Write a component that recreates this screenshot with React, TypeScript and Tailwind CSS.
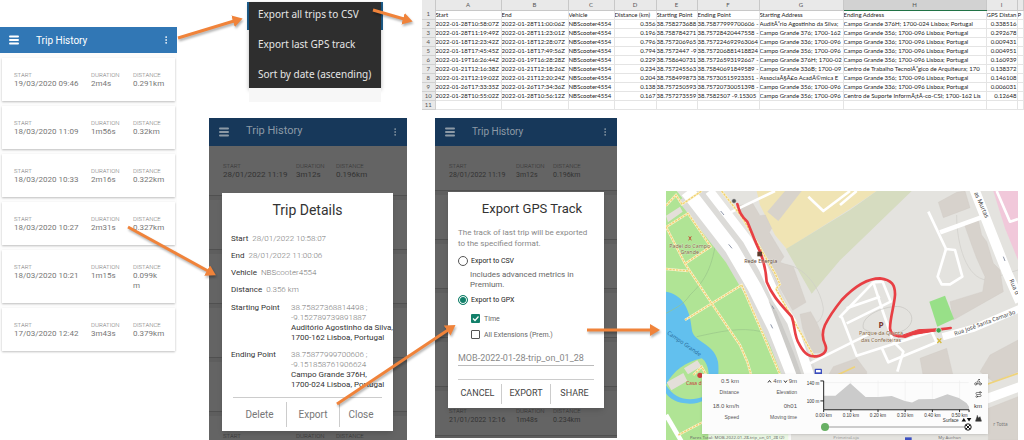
import React from "react";
import { Bike, Menu, MoreVertical, Mountain, Route } from "lucide-react";

type Trip = { start: string; duration: string; distance: string };

const trips: Trip[] = [
  { start: "19/03/2020 09:46", duration: "2m4s", distance: "0.291km" },
  { start: "18/03/2020 11:09", duration: "1m56s", distance: "0.32km" },
  { start: "18/03/2020 10:33", duration: "2m16s", distance: "0.322km" },
  { start: "18/03/2020 10:27", duration: "2m31s", distance: "0.327km" },
  { start: "18/03/2020 10:21", duration: "1m15s", distance: "0.099km" },
  { start: "17/03/2020 12:42", duration: "3m43s", distance: "0.379km" },
];

const letters = ["A", "B", "C", "D", "E", "F", "G", "H", "I", ""];

const sheetRows = [
  ["Start", "End", "Vehicle", "Distance (km)", "Starting Point", "Ending Point", "Starting Address", "Ending Address", "GPS Distan", "P"],
  ["2022-01-28T10:58:07Z", "2022-01-28T11:00:06Z", "NBScooter4554", "0.356", "38.758273688", "38.75877999700606 -", "AuditÃ³rio Agostinho da Silva;", "Campo Grande 376H; 1700-024 Lisboa; Portugal", "0.338516", ""],
  ["2022-01-28T11:19:49Z", "2022-01-28T11:23:01Z", "NBScooter4554", "0.196", "38.758784271", "38.75728420447558 -", "Campo Grande 376; 1700-162", "Campo Grande 356; 1700-096 Lisboa; Portugal", "0.292678", ""],
  ["2022-01-18T12:23:42Z", "2022-01-18T12:28:07Z", "NBScooter4554", "0.796", "38.757206965", "38.757224692963064", "Campo Grande 336; 1700-096", "Campo Grande 336; 1700-096 Lisboa; Portugal", "0.009431", ""],
  ["2022-01-18T17:45:45Z", "2022-01-18T17:49:56Z", "NBScooter4554", "0.794", "38.7572447 -9", "38.757206881418824", "Campo Grande 356; 1700-096", "Campo Grande 336; 1700-096 Lisboa; Portugal", "0.004951", ""],
  ["2022-01-19T16:26:44Z", "2022-01-19T16:28:28Z", "NBScooter4554", "0.229", "38.758640731", "38.75726593192667 -", "Campo Grande 376H; 1700-02", "Campo Grande 356; 1700-096 Lisboa; Portugal", "0.160939", ""],
  ["2022-01-21T12:16:38Z", "2022-01-21T12:18:26Z", "NBScooter4554", "0.234", "38.757245563", "38.75840691849589 -", "Campo Grande 336B; 1700-09", "Centro de Trabalho TecnolÃ³gico de Arquiteura; 170", "0.138372", ""],
  ["2022-01-21T12:19:02Z", "2022-01-21T12:20:24Z", "NBScooter4554", "0.204", "38.758499873", "38.75730515923351 -", "AssociaÃ§Ã£o AcadÃ©mica E", "Campo Grande 356; 1700-096 Lisboa; Portugal", "0.146108", ""],
  ["2022-01-26T17:33:35Z", "2022-01-26T17:34:36Z", "NBScooter4554", "0.138", "38.757250593", "38.75720730051398 -", "Campo Grande 356; 1700-096", "Campo Grande 336; 1700-096 Lisboa; Portugal", "0.006031", ""],
  ["2022-01-28T10:55:02Z", "2022-01-28T10:56:12Z", "NBScooter4554", "0.167", "38.757273559", "38.7582507 -9.15305", "Campo Grande 356; 1700-096", "Centro de Suporte InformÃ¡tÃ­-co-CSI; 1700-162 Lis", "0.12648", ""],
  ["", "", "", "", "", "", "", "", "", ""],
];

type TripColumnsProps = { trip: Trip; columns: string; valueClass?: string };

const TripColumns = ({ trip, columns, valueClass = "text-[8px]" }: TripColumnsProps) => (
  <dl className={`grid leading-[10px] ${columns} ${valueClass}`}>
    <div>
      <dt className="text-[6px] leading-[8px] font-light">START</dt>
      <dd className="whitespace-nowrap">{trip.start}</dd>
    </div>
    <div>
      <dt className="text-[6px] leading-[8px] font-light">DURATION</dt>
      <dd>{trip.duration}</dd>
    </div>
    <div>
      <dt className="text-[6px] leading-[8px] font-light">DISTANCE</dt>
      <dd className="break-all">{trip.distance}</dd>
    </div>
  </dl>
);

const TripHistory = () => (
  <section className="w-[177px] shrink-0 pt-[27px]">
    <header className="flex items-center h-[26px] bg-[#3177b5] pl-2 pr-1.5 text-white">
      <button type="button" aria-label="Menu">
        <Menu size={12} strokeWidth={4} />
      </button>
      <h1 className="ml-4 flex-1 text-[10px]">Trip History</h1>
      <button type="button" aria-label="More">
        <MoreVertical size={10} />
      </button>
    </header>
    <ul className="flex flex-col gap-[5px] bg-[#fcfcfc] pt-[5px] pl-0.5 pr-0.5 text-[#777]">
      {trips.map((trip) => (
        <li key={trip.start} className="bg-white pl-3 pt-[13px] pb-3 shadow-[0_1px_2px_rgba(0,0,0,0.25)]">
          <TripColumns trip={trip} columns={trip.distance === "0.099km" ? "grid-cols-[77px_42px_28px]" : "grid-cols-[77px_42px_1fr]"} />
        </li>
      ))}
    </ul>
  </section>
);

const OverflowMenu = () => (
  <div className="w-[136px] shrink-0 pt-0.5">
    <div className="bg-linear-to-b from-[#1d5f8f] from-33% to-transparent to-33% px-0.5">
      <menu className="flex flex-col gap-4 bg-[#2e2e2e] py-[5px] pl-[9px] h-[86px] text-[10px] leading-[14px] text-[#e6e6e6] font-['Noto_Sans',sans-serif] shadow-[0_2px_4px_rgba(0,0,0,0.3)]">
        <li><button type="button" className="whitespace-nowrap">Export all trips to CSV</button></li>
        <li><button type="button" className="whitespace-nowrap">Export last GPS track</button></li>
        <li><button type="button" className="whitespace-nowrap">Sort by date (ascending)</button></li>
      </menu>
    </div>
    <div className="h-3.5 mx-0.5 bg-[#f7f7f7]"></div>
  </div>
);

const Sheet = () => (
  <div className="flex-1 min-w-0 overflow-hidden">
    <table className="w-full table-fixed border-collapse text-[6px] leading-[8px] text-[#222] font-[Lato,sans-serif]">
      <colgroup>
        <col className="w-[13px]" />
        <col className="w-[66px]" />
        <col className="w-[67px]" />
        <col className="w-[46px]" />
        <col className="w-[42px]" />
        <col className="w-[41px]" />
        <col className="w-[62px]" />
        <col className="w-[84px]" />
        <col className="w-[143px]" />
        <col className="w-[31px]" />
        <col />
      </colgroup>
      <thead>
        <tr className="h-[10px] bg-[#e9e9e9] text-[#555]">
          <th className="border-r border-[#c8c8c8]"></th>
          {letters.map((letter, i) => (
            <th key={i} className={`border-r border-b border-[#c8c8c8] font-normal p-0 ${letter === "H" ? "bg-[#d2d2d2] border-b-[#217346]" : ""}`}>{letter}</th>
          ))}
        </tr>
      </thead>
      <tbody>
        {sheetRows.map((row, i) => (
          <tr key={i} className="h-[9px]">
            <th className="bg-[#e9e9e9] border-r border-b border-[#d0d0d0] font-normal p-0 text-[#555]">{i + 1}</th>
            {row.map((cell, j) => (
              <td key={j} className={`border-r border-b border-[#e4e4e4] p-0 whitespace-nowrap overflow-hidden ${i > 0 && (j === 3 || j === 8) ? "text-right" : ""}`}>{cell}</td>
            ))}
          </tr>
        ))}
      </tbody>
    </table>
  </div>
);

type PhoneProps = {
  className: string;
  titleClass: string;
  cardClass: string;
  columns: string;
  valueClass: string;
  last: Trip;
  children: React.ReactNode;
};

// Trip list dimmed behind an open dialog
const DimmedPhone = ({ className, titleClass, cardClass, columns, valueClass, last, children }: PhoneProps) => {
  const hidden = { start: "", duration: "", distance: "" };
  const cards = [{ start: "28/01/2022 11:19", duration: "3m12s", distance: "0.196km" }, hidden, hidden, hidden, hidden, last];

  return (
    <section className={`relative shrink-0 overflow-hidden bg-[#5e5e5e] ${className}`}>
      <header className="flex items-center h-7 bg-[#17385a] pl-[9px] pr-[7px] text-[#8d9aa6]">
        <button type="button" aria-label="Menu">
          <Menu size={12} strokeWidth={4} />
        </button>
        <h2 className={`ml-4 flex-1 ${titleClass}`}>Trip History</h2>
        <button type="button" aria-label="More">
          <MoreVertical size={10} />
        </button>
      </header>
      <div className="flex flex-col gap-1 text-[#333]">
        {cards.map((trip, i) => (
          <div key={i} className={`shrink-0 bg-[#646464] border-b border-[#505050] pl-3.5 pt-4 ${cardClass}`}>
            {trip.start && <TripColumns trip={trip} columns={columns} valueClass={valueClass} />}
          </div>
        ))}
      </div>
      {children}
    </section>
  );
};

const DetailRow = ({ label, value }: { label: string; value: string }) => (
  <div className="flex items-center gap-1 h-[17px]">
    <dt className="text-[#333]">{label}</dt>
    <dd className="text-[#777] font-light">{value}</dd>
  </div>
);

const PointRow = ({ label, coords, address }: { label: string; coords: string[]; address: string[] }) => (
  <div className="flex mb-[7px]">
    <dt className="w-[60px] shrink-0 text-[#333]">{label}</dt>
    <dd className="whitespace-nowrap">
      {coords.map((line) => <p key={line} className="text-[#777] font-light">{line}</p>)}
      {address.map((line) => <p key={line} className="text-[#333]">{line}</p>)}
    </dd>
  </div>
);

const TripDetails = () => (
  <div role="dialog" aria-label="Trip Details" className="absolute left-[13px] right-3.5 top-[75px] bg-white pt-2 pb-1 shadow-md">
    <h2 className="text-center text-[14px] leading-[18px] text-[#333]">Trip Details</h2>
    <dl className="mt-3 pl-[9px] text-[8px] leading-[10px]">
      <DetailRow label="Start" value="28/01/2022 10:58:07" />
      <DetailRow label="End" value="28/01/2022 11:00:06" />
      <DetailRow label="Vehicle" value="NBScooter4554" />
      <DetailRow label="Distance" value="0.356 km" />
      <div className="pt-1">
        <PointRow label="Starting Point" coords={["38.75827368814498 ;", "-9.152789739891887"]} address={["Auditório Agostinho da Silva,", "1700-162 Lisboa, Portugal"]} />
        <PointRow label="Ending Point" coords={["38.75877999700606 ;", "-9.151858761906624"]} address={["Campo Grande 376H,", "1700-024 Lisboa, Portugal"]} />
      </div>
    </dl>
    <div className="mx-[11px] border-t border-[#ccc] pt-1 grid grid-cols-[54px_53px_1fr] divide-x divide-[#ccc] text-[10px] text-[#777]">
      <button type="button" className="h-[25px]">Delete</button>
      <button type="button" className="h-[25px]">Export</button>
      <button type="button" className="h-[25px]">Close</button>
    </div>
  </div>
);

const ExportTrack = () => (
  <div role="dialog" aria-label="Export GPS Track" className="absolute inset-x-[13px] top-[74px] bg-white pt-2 pb-1 shadow-md text-[8px] text-[#666]">
    <h2 className="pl-3 text-center text-[13px] leading-[18px] text-[#333]">Export GPS Track</h2>
    <div className="px-2.5">
      <p className="mt-[9px] leading-[11px] whitespace-nowrap text-[#888]">The track of last trip will be exported<br />to the specified format.</p>
      <label className="mt-1.5 flex items-center gap-[3px] h-3 text-[7px] leading-[12px] text-[#222]">
        <input type="radio" name="format" className="appearance-none size-2.5 rounded-full border border-[#555] bg-white" />
        Export to CSV
      </label>
      <p className="mt-[3px] pl-3 leading-[10px]">Includes advanced metrics in<br />Premium.</p>
      <label className="mt-1 flex items-center gap-[3px] h-3 text-[7px] leading-[12px] text-[#222]">
        <input type="radio" name="format" defaultChecked className="appearance-none size-2.5 rounded-full border border-[#12806a] bg-white checked:bg-[#12806a] checked:shadow-[inset_0_0_0_1px_white]" />
        Export to GPX
      </label>
      <label className="relative mt-[7px] ml-[13px] flex items-center gap-1 h-3 text-[7px] leading-[12px]">
        <input type="checkbox" defaultChecked className="appearance-none size-[9px] rounded-[1px] bg-[#12806a]" />
        <svg viewBox="0 0 9 9" className="absolute left-0 size-[9px] pointer-events-none">
          <path d="M2 4.5 L4 6.5 L7.5 2.5" fill="none" stroke="white" strokeWidth="1.2" />
        </svg>
        Time
      </label>
      <label className="mt-1 ml-[13px] flex items-center gap-1 h-3 text-[7px] leading-[12px]">
        <input type="checkbox" className="appearance-none size-[9px] rounded-[1px] border border-[#555]" />
        All Extensions (Prem.)
      </label>
      <input aria-label="File name" defaultValue="MOB-2022-01-28-trip_on_01_28" className="mt-[11px] block w-full h-3.5 border-b border-[#bbb] text-[9px] text-[#888] outline-none" />
      <div className="mt-[13px] border-t border-[#ccc] pt-1 grid grid-cols-[44px_49px_1fr] divide-x divide-[#ccc] text-[9px] text-[#444]">
        <button type="button" className="h-5 pr-1">CANCEL</button>
        <button type="button" className="h-5">EXPORT</button>
        <button type="button" className="h-5 pl-1">SHARE</button>
      </div>
    </div>
  </div>
);

const footpaths = [
  "M18 62 L48 30 L66 58 L125 18",
  "M20 125 L84 85 L152 185 L75 236",
  "M18 125 L75 236 L155 355 L240 480 L262 530 L275 575",
  "M18 252 L85 258",
  "M75 405 L245 300 L310 450 L365 580",
  "M55 750 L135 708",
  "M185 18 L245 95 L345 265 L360 298 L348 312 L465 520",
  "M100 570 L125 545 L140 572",
];

const whiteRoads = [
  "M445 35 L490 78 L570 18",
  "M205 85 L345 18",
  "M450 535 L570 475 L625 448",
  "M538 398 L560 375 L640 292 L668 290 L692 350 L560 415",
  "M560 370 L660 335",
  "M545 395 L590 512 L665 488 L815 440",
  "M640 292 L668 378 L700 470 L730 500 L712 560",
  "M665 488 L685 532 L830 472 L815 440",
  "M805 80 L858 192",
  "M858 192 L833 275 L845 298 L870 298 L907 275 L885 195 Z",
  "M1010 18 L1050 110 L1074 102",
  "M540 60 L590 18",
];

const MapDrawing = () => (
  <svg viewBox="18 18 1056 747" className="block w-full" fontFamily="'Noto Sans', sans-serif">
    <rect x="18" y="18" width="1056" height="747" fill="#e4e3df" />
    {/* school grounds and field */}
    <path d="M290 18 H650 L570 72 L380 192 L345 150 L300 60 Z" fill="#f0e4b4" />
    <path d="M650 18 H755 L540 226 L455 326 L378 192 L570 75 Z" fill="#d6dcc0" />
    <path d="M375 18 H425 L355 108 L322 80 Z" fill="#d8d3cb" />
    <path d="M1000 18 H1074 V225 L1035 130 Z" fill="#f1c8da" />
    {/* park and lake */}
    <path d="M18 18 H50 L150 140 L200 215 L245 285 L300 400 L385 575 V765 H18 Z" fill="#b0e495" />
    <path d="M18 320 C60 325 90 365 95 430 C98 475 160 470 174 530 C182 590 160 655 90 656 C50 656 28 640 18 625 Z" fill="#62c0ee" />
    <path d="M18 600 C40 555 80 530 125 520 C150 535 155 600 130 635 C90 650 45 645 18 600 Z" fill="#b0e495" />
    <path d="M72 550 L112 526 L124 544 L84 568 Z M20 592 L70 564 L82 588 L34 616 Z M18 92 L60 65 L68 80 L24 112 Z" fill="#e4dfd9" />
    <g fill="none" stroke="#98c48a" strokeWidth="2">
      <path d="M165 185 C150 270 120 300 90 330 C70 360 45 370 18 385" />
      <path d="M110 455 C180 440 240 425 305 440" />
      <path d="M360 240 C420 230 480 300 490 370 C490 390 480 410 470 412" stroke="#cfcdc8" />
      <path d="M890 90 C890 180 920 280 980 285 L1074 255" stroke="#cfcdc8" />
    </g>
    {/* buildings */}
    <g fill="#d7d2cc" stroke="#cdc8c2" strokeWidth="1">
      <path d="M232 62 L278 55 L300 92 L316 90 L335 130 L328 142 L372 215 L360 232 L400 245 L438 352 L398 376 L355 300 L330 250 L300 180 Z" />
      <path d="M420 388 L452 380 L470 412 L482 440 L500 500 L455 505 L428 430 Z" />
      <path d="M835 52 L890 22 L915 18 L930 68 L850 98 Z" />
      <path d="M912 115 L955 105 L965 150 L980 170 L1000 235 L1020 255 L1030 320 L880 405 L870 350 L968 320 L975 275 L950 220 L935 180 Z" />
      <path d="M990 510 L1074 465 V560 L1000 590 L960 560 Z" />
      <path d="M520 545 L590 520 L620 560 V580 H500 Z" />
      <path d="M780 520 L860 490 L880 575 H790 Z" />
      <path d="M985 670 L1074 635 V765 H985 Z" />
    </g>
    {/* avenue */}
    <path d="M95 18 L240 205 L310 325 L375 460 L425 585" fill="none" stroke="#dcdbd8" strokeWidth="100" />
    <path d="M82 18 L215 190 L285 310 L345 430 L408 590" fill="none" stroke="#fff" strokeWidth="42" />
    <path d="M148 18 L262 165 L310 250 L350 340 L395 410 L455 590" fill="none" stroke="#fff" strokeWidth="28" />
    <path d="M325 345 L350 380 L400 500 L425 570 H410 L380 490 Z" fill="#cccbc8" />
    {whiteRoads.map((d) => (
      <path key={d} d={d} fill="none" stroke="#fff" strokeWidth="8" strokeLinejoin="round" />
    ))}
    <path d="M840 142 L970 95" stroke="#fff" strokeWidth="14" />
    <path d="M942 10 L985 120 L1040 260 L1080 350" fill="none" stroke="#fff" strokeWidth="30" />
    <path d="M848 455 L940 430 L1080 370" fill="none" stroke="#fff" strokeWidth="22" />
    <path d="M970 645 L1080 605" stroke="#fff" strokeWidth="28" />
    <path d="M18 690 L65 770" stroke="#fff" strokeWidth="14" />
    {footpaths.map((d) => (
      <g key={d} fill="none">
        <path d={d} stroke="#fbf3cf" strokeWidth="7" />
        <path d={d} stroke="#f0d070" strokeWidth="4" strokeDasharray="7 3" />
      </g>
    ))}
    <path d="M975 600 L1074 565 M500 585 L585 545" stroke="#efd37a" strokeWidth="5" />
    <path d="M808 350 L855 332 L882 402 L832 425 Z" fill="#98e088" />
    <g fill="none" stroke="#c4c2be" strokeWidth="2">
      <path d="M610 430 C600 390 680 360 720 365 C760 375 765 410 740 430 C720 450 640 455 610 430" />
    </g>
    {/* one-way arrows */}
    <g stroke="#8d95a8" strokeWidth="3">
      <path d="M182 78 L192 90 M206 178 L216 190 M332 418 L338 430 M1030 215 L1035 228 M336 362 L342 372" />
    </g>
    <path
      d="M232 57 C238 80 242 92 262 110 C275 140 285 170 300 200 C312 230 318 260 320 290 C340 340 370 365 395 395 C405 420 402 455 418 478 C435 510 450 516 470 514 C495 510 502 495 496 480 C486 460 486 440 495 420 C510 390 525 370 545 345 C580 308 620 280 660 280 C695 284 706 300 705 330 C703 360 690 400 690 430 C692 455 715 452 735 455 C770 440 800 438 872 429"
      fill="none" stroke="#e83f44" strokeWidth="8" strokeLinecap="round" strokeLinejoin="round"
    />
    <path d="M715 455 L775 434 L870 430 L790 444 Z" fill="#e83f44" stroke="#e83f44" strokeWidth="3" />
    <circle cx="222" cy="48" r="7" fill="#555" stroke="#ddd" strokeWidth="2" />
    <rect x="292" y="200" width="14" height="14" fill="#5d3a2c" />
    <circle cx="836" cy="436" r="8" fill="#43a552" stroke="#eaf5ea" strokeWidth="2" />
    <circle cx="120" cy="571" r="8" fill="#c9403d" />
    <path d="M86 154 L94 166 M94 154 L86 166" stroke="#c05b3c" strokeWidth="3" />
    <path d="M832 460 L844 474 M844 460 L832 474" stroke="#d5b93a" strokeWidth="4" />
    <g fill="#3b4fc1">
      <rect x="464" y="551" width="22" height="20" rx="3" />
      <rect x="468" y="555" width="14" height="7" fill="#fff" />
      <rect x="735" y="757" width="20" height="8" />
    </g>
    <g fontSize="16" textAnchor="middle" fill="#84663f" stroke="#fff" strokeWidth="2" strokeOpacity="0.5" paintOrder="stroke">
      <text x="89" y="188">Padel do Campo</text>
      <text x="89" y="208">Grande</text>
      <text x="302" y="233" fill="#5f4634">Rede Energia</text>
      <text x="663" y="451">Parque da Quinta</text>
      <text x="663" y="471">das Confeiteiras</text>
      <text x="663" y="430" fontSize="25" fontWeight="bold" fill="#7a3a34">P</text>
    </g>
    <text transform="translate(20 446) rotate(35)" fontSize="17" fill="#2b6f9f">Campo Grande</text>
    <text x="78" y="600" fontSize="15" fill="#c9403d">Casa d</text>
    <text transform="translate(885 452) rotate(-20)" fontSize="17" fill="#444">Rua José Santa Camarão</text>
    <text transform="translate(942 24) rotate(66)" fontSize="18" fill="#444">as Murtas</text>
    <text transform="translate(1048 286) rotate(66)" fontSize="18" fill="#444">Rua d</text>
    <text x="1000" y="722" fontSize="14" fill="#777">r Totta</text>
    <text x="835" y="761" fontSize="13" fill="#777">My Auchan</text>
    <text x="520" y="761" fontSize="13" fill="#999">PrimeiraLoja</text>
    <rect x="145" y="746" width="248" height="19" fill="#fff" fillOpacity="0.75" />
    <text x="90" y="761" fontSize="13" fill="#666">Pares Total: MOB-2022-01-28-trip_on_01_28 (2)</text>
  </svg>
);

const ticks = ["0.00 km", "0.10 km", "0.20 km", "0.30 km", "0.40 km", "0.50 km"];

const ElevationPanel = () => (
  <div className="absolute left-9 right-[30px] bottom-1.5 h-[60px] flex bg-[#fcfcfc] shadow-sm text-[#555] font-['Liberation_Sans',sans-serif]">
    <dl className="w-[95px] shrink-0 grid grid-cols-[37px_58px] content-start pt-1 text-right text-[6px] leading-[7px]">
      <div className="flex flex-col gap-1 h-[25px]"><dd>0.5 km</dd><dt className="text-[5px]">Distance</dt></div>
      <div className="flex flex-col gap-1 h-[25px]">
        <dd className="flex items-center justify-end gap-px">
          <svg viewBox="0 0 5 5" className="size-[5px]"><path d="M1 3.5 L2.5 1.5 L4 3.5" fill="none" stroke="#333" /></svg>
          4m
          <svg viewBox="0 0 5 5" className="size-[5px]"><path d="M1 1.5 L2.5 3.5 L4 1.5" fill="none" stroke="#333" /></svg>
          9m
        </dd>
        <dt className="text-[5px]">Elevation</dt>
      </div>
      <div className="flex flex-col gap-1"><dd>18.0 km/h</dd><dt className="text-[5px]">Speed</dt></div>
      <div className="flex flex-col gap-1"><dd>0h01</dd><dt className="text-[5px]">Moving time</dt></div>
    </dl>
    <div className="flex-1 min-w-0 pl-2 pt-1">
      <svg viewBox="345 84 510 138" className="block w-full">
        <path d="M403 98 H845 M485 92 V180 M568 92 V180 M651 92 V180 M734 92 V180 M817 92 V180" stroke="#eee" strokeWidth="2" />
        <path d="M402 181 V138 H438 L483 100 L530 142 L570 142 L610 139 L650 154 L672 159 L692 149 L740 148 L780 134 L815 145 L838 160 L846 172 V181 Z" fill="#cbcbcb" />
        <path d="M392 93 H402 V181 H846 M392 154 H402 M402 181 V188 M485 181 V188 M568 181 V188 M651 181 V188 M734 181 V188 M817 181 V188 M846 181 V188" fill="none" stroke="#222" strokeWidth="3" />
        <g fontSize="14" fill="#333">
          <text x="389" y="104" textAnchor="end">140 m</text>
          <text x="389" y="159" textAnchor="end">100 m</text>
          {ticks.map((tick, i) => (
            <text key={tick} x={402 + i * 83} y="202" textAnchor="middle">{tick}</text>
          ))}
          <text x="766" y="217">Surface</text>
        </g>
        <path d="M823 217 L830 206 L837 217 Z M839 206 H853 L846 217 Z" fill="#111" />
      </svg>
      <div className="flex items-center pl-4">
        <input type="range" aria-label="Position" defaultValue={0} className="appearance-none flex-1 min-w-0 h-0.5 bg-[#ccc] [&::-webkit-slider-thumb]:appearance-none [&::-webkit-slider-thumb]:size-2 [&::-webkit-slider-thumb]:rounded-full [&::-webkit-slider-thumb]:bg-[#68b064]" />
        <svg viewBox="0 0 8 8" className="size-2">
          <circle cx="4" cy="4" r="3.2" fill="#fff" stroke="#111" />
          <path d="M2 2 L6 6 M6 2 L2 6" stroke="#111" />
        </svg>
      </div>
    </div>
    <div className="w-4 shrink-0 flex flex-col items-center justify-between pt-1 pb-3 pr-1 text-[6px] leading-[7px] text-[#333]">
      <Bike size={8} />
      <Route size={7} />
      <span>km</span>
      <Mountain size={7} fill="#333" />
    </div>
  </div>
);

const arrows = ["M178 38 L234 21", "M373 10 L404 19", "M128 227 L208 271", "M337 404 L448 330", "M587 330 L651 330"];

// Orange connectors between the screens
const Arrows = () => (
  <svg viewBox="0 0 1024 440" className="absolute left-0 top-0 w-[1024px] pointer-events-none drop-shadow-[1px_2px_1px_rgba(0,0,0,0.3)]">
    <defs>
      <marker id="head" markerWidth="12" markerHeight="12" refX="1" refY="6" orient="auto" markerUnits="userSpaceOnUse">
        <path d="M0 0 L10 6 L0 12 Z" fill="#f0833a" />
      </marker>
    </defs>
    {arrows.map((d) => (
      <path key={d} d={d} stroke="#f0833a" strokeWidth="3" markerEnd="url(#head)" />
    ))}
  </svg>
);

const App = () => {
  return (
    <main className="relative flex items-start overflow-hidden bg-white font-[Roboto,sans-serif]">
      <TripHistory />
      <div className="flex-1 min-w-0">
        <div className="flex items-start pl-[70px] gap-[39px]">
          <OverflowMenu />
          <Sheet />
        </div>
        <div className="flex items-start mt-2 pl-8 pr-1.5">
          <DimmedPhone
            className="w-[198px] h-[322px]"
            titleClass="text-[11px]"
            cardClass="h-[50px]"
            columns="grid-cols-[73px_40px_1fr]"
            valueClass="text-[8px]"
            last={{ start: "21/01/2022 12:16", duration: "1m48s", distance: "0.234km" }}
          >
            <TripDetails />
          </DimmedPhone>
          <DimmedPhone
            className="ml-7 w-[182px] h-80"
            titleClass="text-[10px]"
            cardClass="h-[45px]"
            columns="grid-cols-[67px_37px_1fr]"
            valueClass="text-[7px]"
            last={{ start: "21/01/2022 12:16", duration: "1m48s", distance: "0.234km" }}
          >
            <ExportTrack />
          </DimmedPhone>
          <div className="relative flex-1 min-w-0 ml-[49px] mt-[73px]">
            <MapDrawing />
            <ElevationPanel />
          </div>
        </div>
      </div>
      <Arrows />
    </main>
  );
};

export default App;
